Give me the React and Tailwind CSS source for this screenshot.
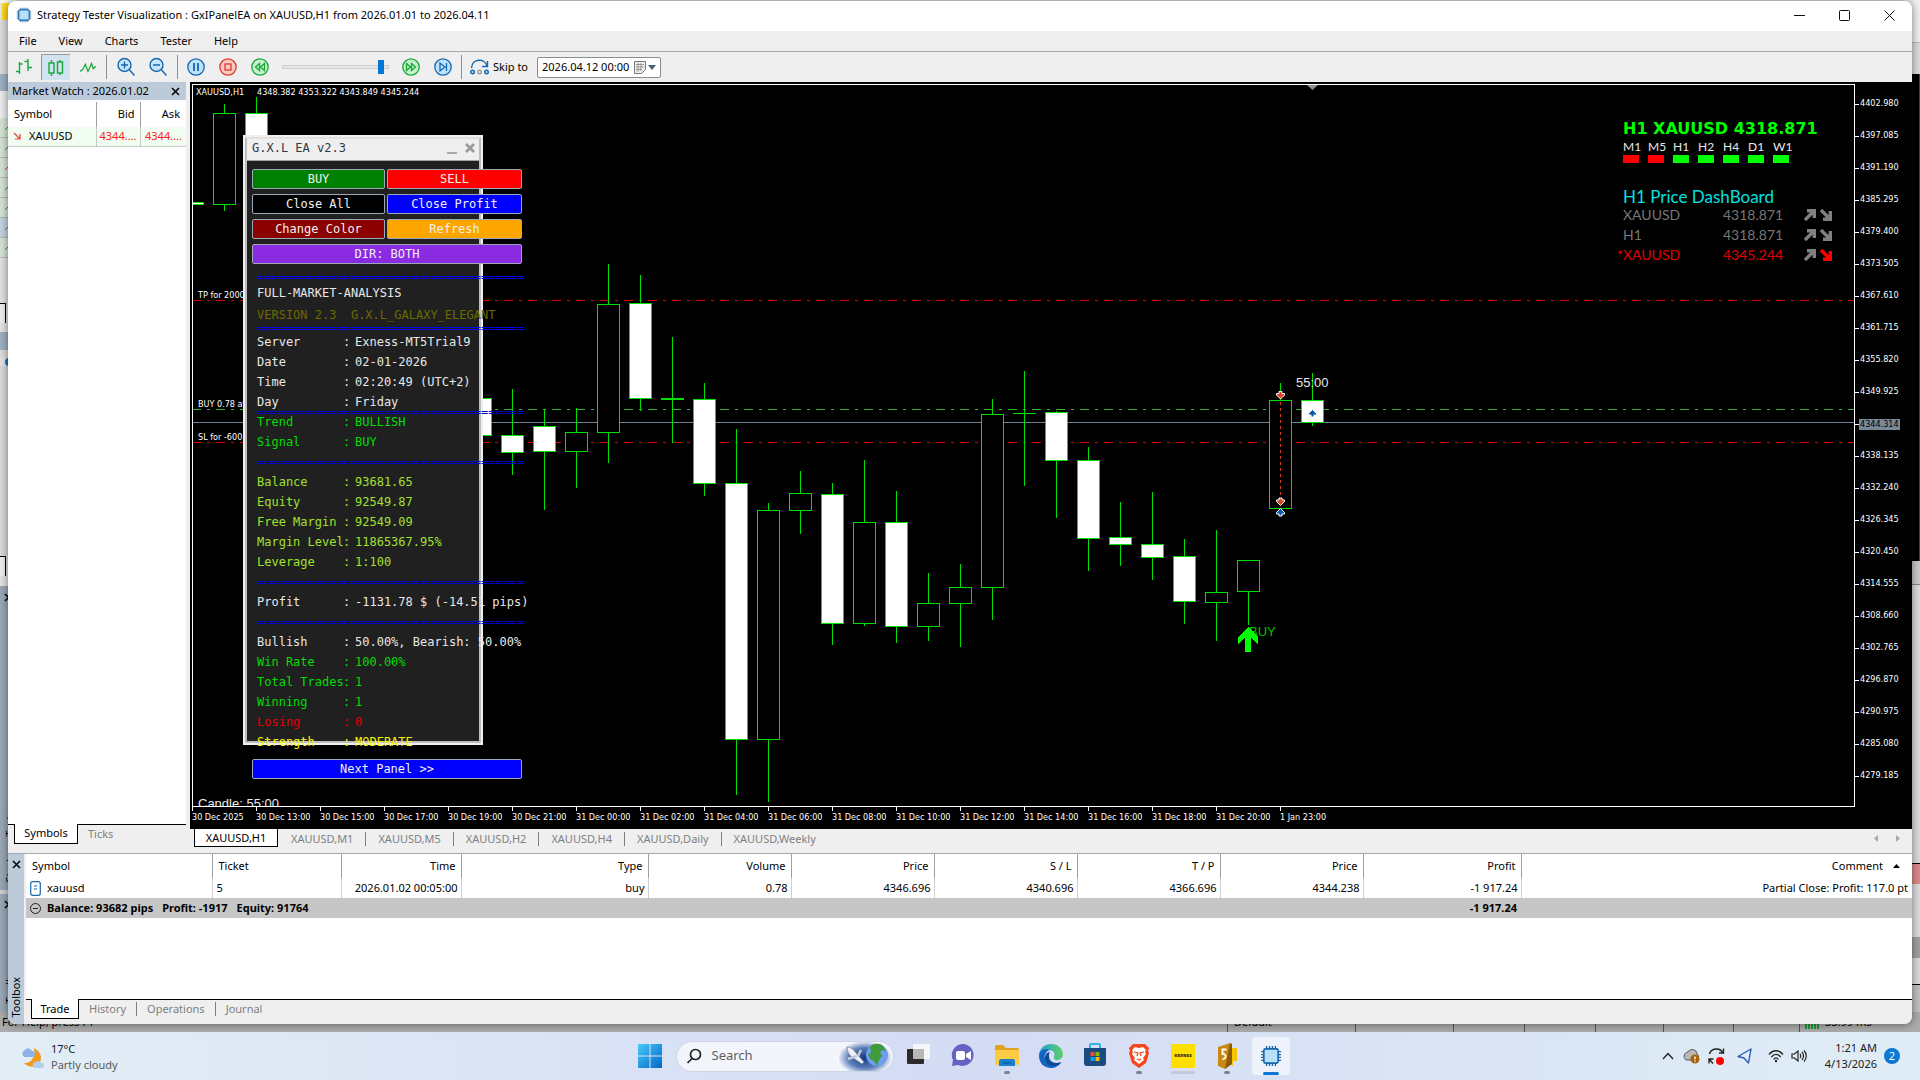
const ui = "font-['Noto_Sans',sans-serif]";
const chartFont = "font-['DejaVu_Sans_Condensed','Noto_Sans',sans-serif]";

/* x step is 32px; o/c are body top/bottom, h/l the wick ends */
const candles = [
  { k: 0, h: 202, l: 204, o: 202, c: 204, f: 1 },
  { k: 1, h: 104, l: 210, o: 113, c: 204 },
  { k: 2, h: 97, l: 170, o: 113, c: 160, f: 1 },
  { k: 9, h: 398, l: 436, o: 398, c: 435, f: 1 },
  { k: 10, h: 389, l: 474, o: 435, c: 452, f: 1 },
  { k: 11, h: 409, l: 509, o: 426, c: 451, f: 1 },
  { k: 12, h: 408, l: 487, o: 432, c: 451 },
  { k: 13, h: 264, l: 462, o: 304, c: 432 },
  { k: 14, h: 275, l: 410, o: 303, c: 398, f: 1 },
  { k: 15, h: 337, l: 442, o: 398, c: 399 },
  { k: 16, h: 383, l: 495, o: 399, c: 483, f: 1 },
  { k: 17, h: 429, l: 794, o: 483, c: 739, f: 1 },
  { k: 18, h: 503, l: 801, o: 510, c: 739 },
  { k: 19, h: 471, l: 533, o: 493, c: 510 },
  { k: 20, h: 483, l: 644, o: 494, c: 623, f: 1 },
  { k: 21, h: 460, l: 625, o: 522, c: 623 },
  { k: 22, h: 491, l: 642, o: 522, c: 626, f: 1 },
  { k: 23, h: 573, l: 640, o: 603, c: 626 },
  { k: 24, h: 564, l: 646, o: 587, c: 603 },
  { k: 25, h: 399, l: 619, o: 414, c: 587 },
  { k: 26, h: 371, l: 485, o: 413, c: 413 },
  { k: 27, h: 411, l: 517, o: 412, c: 460, f: 1 },
  { k: 28, h: 447, l: 570, o: 460, c: 538, f: 1 },
  { k: 29, h: 502, l: 565, o: 537, c: 544, f: 1 },
  { k: 30, h: 492, l: 579, o: 544, c: 557, f: 1 },
  { k: 31, h: 539, l: 623, o: 556, c: 601, f: 1 },
  { k: 32, h: 530, l: 640, o: 592, c: 602 },
  { k: 33, h: 560, l: 624, o: 560, c: 591 },
  { k: 34, h: 383, l: 508, o: 400, c: 508 },
  { k: 35, h: 373, l: 425, o: 400, c: 422, f: 1 },
];

const prices = ["4402.980", "4397.085", "4391.190", "4385.295", "4379.400", "4373.505", "4367.610", "4361.715", "4355.820", "4349.925", "4344.314", "4338.135", "4332.240", "4326.345", "4320.450", "4314.555", "4308.660", "4302.765", "4296.870", "4290.975", "4285.080", "4279.185"];
const times = ["30 Dec 2025", "30 Dec 13:00", "30 Dec 15:00", "30 Dec 17:00", "30 Dec 19:00", "30 Dec 21:00", "31 Dec 00:00", "31 Dec 02:00", "31 Dec 04:00", "31 Dec 06:00", "31 Dec 08:00", "31 Dec 10:00", "31 Dec 12:00", "31 Dec 14:00", "31 Dec 16:00", "31 Dec 18:00", "31 Dec 20:00", "1 Jan 23:00"];

function Chip({ size = 16 }) {
  return (
    <svg width={size} height={size} viewBox="0 0 20 20">
      <path d="M6 1v18M8.7 1v18M11.3 1v18M14 1v18M1 6h18M1 8.7h18M1 11.3h18M1 14h18" stroke="#1567ad" strokeWidth="1.2" />
      <rect x="3.5" y="3.5" width="13" height="13" rx="1.5" fill="#b9e0fb" stroke="#1567ad" strokeWidth="1.5" />
    </svg>
  );
}

function Circle({ fill, stroke, children }) {
  return (
    <svg width="20" height="20" viewBox="0 0 20 20" fill="none" stroke={stroke} strokeWidth="1.3">
      <circle cx="10" cy="10" r="8.2" fill={fill} />
      {children}
    </svg>
  );
}

function ToolButton({ label, on, children }) {
  return (
    <button aria-label={label} className={on ? "flex h-[26px] w-[29px] items-center justify-center border-t border-l border-[#8e9aa6] bg-[#d3e2ef]" : "flex h-[26px] w-8 items-center justify-center"}>
      {children}
    </button>
  );
}

const Sep = () => <div className="h-6 w-px bg-[#8f8f8f]" />;

function Toolbar() {
  const g = "#18a838";
  const b = "#1567ad";
  return (
    <div className="flex h-[30px] items-center bg-[#efefef]">
      <div className="flex w-[98px] items-center">
        <div className="pr-px">
          <ToolButton label="Bar chart">
            <svg width="18" height="18" viewBox="0 0 18 18" fill="none" stroke={g} strokeWidth="1.4"><path d="M4.500 4v12M1 13.500h3.500M4.500 6h3M13 1v12M9.500 3.500H13M13 9.500h4" /></svg>
          </ToolButton>
        </div>
        <ToolButton label="Candlestick chart" on>
          <svg width="18" height="18" viewBox="0 0 18 18" fill="none" stroke={g} strokeWidth="1.4"><path d="M4.500 1v3M4.500 14v3M13 1v2M13 14v2" /><rect x="2" y="4" width="5" height="10" /><rect x="10.500" y="3" width="5" height="11" /></svg>
        </ToolButton>
        <div className="pl-[2px]">
          <ToolButton label="Line chart">
            <svg width="18" height="14" viewBox="0 0 20 16" fill="none" stroke={g} strokeWidth="1.400"><path d="M1 13l3 -2 3-6 3 8 4-9 2 6 3-3" /></svg>
          </ToolButton>
        </div>
      </div>
      <Sep />
      <div className="flex w-[70px] pl-[3px]">
        {["+", "-"].map((s) => (
          <ToolButton key={s} label={s === "+" ? "Zoom in" : "Zoom out"}>
            <svg width="20" height="20" viewBox="0 0 20 20" fill="none" stroke={b} strokeWidth="1.4"><circle cx="8.500" cy="8" r="6.500" fill="#c5e5fb" /><path d="M13.500 13l5 5.500" /><path d={s === "+" ? "M5 8h7M8.500 4.500v7" : "M5 8h7"} /></svg>
          </ToolButton>
        ))}
      </div>
      <Sep />
      <div className="flex items-center pl-[2px]">
        <ToolButton label="Pause"><Circle fill="#bfe2fb" stroke={b}><path d="M8 6v8M12 6v8" strokeWidth="1.800" /></Circle></ToolButton>
        <ToolButton label="Stop"><Circle fill="#fbc9c4" stroke="#dc3a2c"><rect x="7" y="7" width="6" height="6" /></Circle></ToolButton>
        <ToolButton label="Slower"><Circle fill="#c4f3cd" stroke={g}><path d="M9.500 6.500v7L5.500 10zM14.500 6.500v7l-4-3.500z" /></Circle></ToolButton>
        <input type="range" aria-label="Speed" defaultValue="91" min="0" max="95" className="mx-[6px] h-4 w-[107px] appearance-none bg-transparent [&::-webkit-slider-runnable-track]:h-1 [&::-webkit-slider-runnable-track]:border [&::-webkit-slider-runnable-track]:border-[#d0d0d0] [&::-webkit-slider-runnable-track]:bg-[#e6e6e6] [&::-webkit-slider-thumb]:-mt-[6px] [&::-webkit-slider-thumb]:h-[14px] [&::-webkit-slider-thumb]:w-[6px] [&::-webkit-slider-thumb]:appearance-none [&::-webkit-slider-thumb]:bg-[#0078d7]" />
        <ToolButton label="Faster"><Circle fill="#c4f3cd" stroke={g}><path d="M5.500 6.500v7l4-3.500zM10.500 6.500v7l4-3.500z" /></Circle></ToolButton>
        <ToolButton label="Step forward"><Circle fill="#bfe2fb" stroke={b}><path d="M7 6v8l5-4zM13.500 6v8" /></Circle></ToolButton>
      </div>
      <div className="pl-[2px]"><Sep /></div>
      <button className="ml-2 flex items-center gap-[3px] text-[11px]">
        <svg width="20" height="18" viewBox="0 0 20 18" fill="none" strokeWidth="1.400"><path d="M1.500 10C2 0 15 0 17 8M17.500 3v5.500h-5.500" stroke={b} /><circle cx="2.500" cy="14" r="1.800" stroke={b} fill="#c5e5fb" /><circle cx="9.500" cy="14" r="1.800" stroke="#999" /><circle cx="16.500" cy="14" r="1.800" stroke={b} fill="#c5e5fb" /></svg>
        Skip to
      </button>
      <div className="ml-[9px] flex h-[21px] w-[124px] items-center rounded-[2px] border border-[#8c8c8c] bg-white pr-1 pl-1">
        <input aria-label="Skip to date" defaultValue="2026.04.12 00:00" className="w-[92px] min-w-0 text-[11px] outline-none" />
        <button aria-label="Open calendar" className="flex items-center gap-[2px]">
          <svg width="12" height="13" viewBox="0 0 12 13"><path d="M.500.500h11v8l-4 4h-7z" fill="#eee" stroke="#777" /><path d="M2 3.500h8M2 6h8M2 8.500h6M4 2v9M7 2v8" stroke="#999" /></svg>
          <svg width="8" height="5" viewBox="0 0 8 5"><path d="M0 0h8L4 5z" fill="#44607c" /></svg>
        </button>
      </div>
    </div>
  );
}

function MarketWatch() {
  return (
    <section className="flex w-[178px] flex-col bg-white">
      <div className="flex h-[18px] items-center justify-between bg-[#bccbda] pr-[6px] pl-1 text-[11px]">
        <span>Market Watch : 2026.01.02</span>
        <button aria-label="Close Market Watch"><X /></button>
      </div>
      <div className="flex-1 pt-[2px]">
        <table className="w-full table-fixed border-collapse text-[11px]">
          <colgroup><col className="w-[88px]" /><col className="w-11" /><col /></colgroup>
          <thead>
            <tr className="h-[25px]">
              <th className="border-r border-[#a0a0a0] pl-[6px] text-left font-normal">Symbol</th>
              <th className="border-r border-[#a0a0a0] pr-[5px] text-right font-normal">Bid</th>
              <th className="pr-[6px] text-right font-normal">Ask</th>
            </tr>
          </thead>
          <tbody>
            <tr className="h-[19px] border-b border-[#c8c8c8] bg-[#f0fdf0]">
              <td className="border-r border-[#c8c8c8] pl-[5px]">
                <span className="flex items-center gap-2">
                  <svg width="8" height="8" viewBox="0 0 8 8" fill="none" stroke="#e04030" strokeWidth="1.200"><path d="M1 1l6 6M7 2v5H2" /></svg>
                  XAUUSD
                </span>
              </td>
              <td className="border-r border-[#c8c8c8] pr-[3px] text-right text-[#ff1a1a]">4344....</td>
              <td className="pr-1 text-right text-[#ff1a1a]">4344....</td>
            </tr>
          </tbody>
        </table>
      </div>
      <div className="flex h-[29px] bg-[#efefef] text-[11px] text-[#808080]">
        <div className="w-[6px] border-t border-black" />
        <button className="h-[20px] w-[64px] border-r border-b border-l border-black bg-white text-black">Symbols</button>
        <div className="flex-1 border-t border-black"><button className="h-[18px] px-[10px]">Ticks</button></div>
      </div>
    </section>
  );
}

function X() {
  return <svg width="9" height="9" viewBox="0 0 9 9" stroke="#000" strokeWidth="1.500"><path d="M1 1l7 7M8 1L1 8" /></svg>;
}

const sep = "=".repeat(37);
const info = [
  ["Server", "Exness-MT5Trial9", "text-[#e8e8e8]"],
  ["Date", "02-01-2026", "text-[#e8e8e8]"],
  ["Time", "02:20:49 (UTC+2)", "text-[#e8e8e8]"],
  ["Day", "Friday", "text-[#e8e8e8]"],
];
const trend = [
  ["Trend", "BULLISH", "text-[#00dd00]"],
  ["Signal", "BUY", "text-[#00dd00]"],
];
const account = [
  ["Balance", "93681.65", "text-[#a0e030]"],
  ["Equity", "92549.87", "text-[#a0e030]"],
  ["Free Margin", "92549.09", "text-[#a0e030]"],
  ["Margin Level", "11865367.95%", "text-[#a0e030]"],
  ["Leverage", "1:100", "text-[#a0e030]"],
];
const stats = [
  ["Bullish", "50.00%, Bearish: 50.00%", "text-[#e8e8e8]"],
  ["Win Rate", "100.00%", "text-[#00dd00]"],
  ["Total Trades", "1", "text-[#00dd00]"],
  ["Winning", "1", "text-[#00dd00]"],
  ["Losing", "0", "text-[#e00000]"],
  ["Strength", "MODERATE", "text-[#f4f400]"],
];

function Rows({ data }) {
  return data.map(([k, v, c]) => (
    <div key={k} className={"flex h-5 leading-5 whitespace-pre " + c}>
      <span className="w-[86px] shrink-0">{k}</span>
      <span className="w-3 shrink-0">:</span>
      <span>{v}</span>
    </div>
  ));
}

function PanelButton({ className, children }) {
  return <button className={"h-5 rounded-[2px] border border-[#9aa8b8] text-center leading-[18px] text-[#f0f0f0] " + className}>{children}</button>;
}

function EaPanel() {
  return (
    <div className="absolute top-[50px] left-[50px] h-[610px] w-[240px] border-2 border-[#efefef] bg-[#efefef] font-['DejaVu_Sans_Mono',monospace] text-[12px]">
      <div className="flex h-full flex-col border-2 border-[#bdbdbd] border-t-[#e0e0e0]">
        <div className="flex h-[21px] shrink-0 items-center pr-1 pb-[3px] pl-[5px] text-[#303848]">
          <span className="flex-1">G.X.L EA v2.3</span>
          <button aria-label="Minimize panel" className="mr-2 h-4 pt-[9px]"><div className="h-[2px] w-[10px] bg-[#a8a8a8]" /></button>
          <button aria-label="Close panel"><svg width="10" height="10" viewBox="0 0 10 10" stroke="#9a9a9a" strokeWidth="2.600"><path d="M1 1l8 8M9 1L1 9" /></svg></button>
        </div>
        <div className="min-h-0 flex-1 border-t border-[#a0a0a0] bg-[#202020] pt-[8px] pl-[5px]">
          <div className="w-[270px]">
            <div className="grid grid-cols-[133px_135px] gap-x-[2px] gap-y-[5px]">
              <PanelButton className="bg-[#008000]">BUY</PanelButton>
              <PanelButton className="bg-[#ff0000]">SELL</PanelButton>
              <PanelButton className="bg-black">Close All</PanelButton>
              <PanelButton className="bg-[#0000ff]">Close Profit</PanelButton>
              <PanelButton className="bg-[#8b0000]">Change Color</PanelButton>
              <PanelButton className="bg-[#ffa500]">Refresh</PanelButton>
              <PanelButton className="col-span-2 bg-[#8a2be2]">DIR: BOTH</PanelButton>
            </div>
            <div className="pl-[5px] whitespace-pre">
              <div className="mt-2 h-[11px] leading-[11px] text-[#0000ff]">{sep}</div>
              <div className="h-5 leading-5 text-[#e8e8e8]">FULL-MARKET-ANALYSIS</div>
              <div className="mt-[2px] h-5 leading-5 text-[#6b6b00]">{"VERSION 2.3  G.X.L_GALAXY_ELEGANT"}</div>
              <div className="h-[7px] leading-[7px] text-[#0000ff]">{sep}</div>
              <Rows data={info} />
              <div className="h-0 leading-0 text-[#0000d0]">{sep}</div>
              <Rows data={trend} />
              <div className="h-5 leading-5 text-[#0000d0]">{sep}</div>
              <Rows data={account} />
              <div className="h-5 leading-5 text-[#0000d0]">{sep}</div>
              <Rows data={[["Profit", "-1131.78 $ (-14.51 pips)", "text-[#e8e8e8]"]]} />
              <div className="h-5 leading-5 text-[#0000d0]">{sep}</div>
              <Rows data={stats} />
            </div>
            <PanelButton className="mt-[7px] w-[270px] bg-[#0000ff]">Next Panel &gt;&gt;</PanelButton>
          </div>
        </div>
      </div>
    </div>
  );
}

function Marker({ x, y, up, color }) {
  const d = up ? "M0-4L4 0V1.500H1.500V3.500H-1.500V1.500H-4V0z" : "M0 4L4 0V-1.500H1.500V-3.500H-1.500V-1.500H-4V0z";
  return <path transform={`translate(${x} ${y})`} d={d} fill={color} stroke="#fff" strokeWidth="1" />;
}

function Plot() {
  return (
    <svg className="block h-full w-full" shapeRendering="crispEdges">
      <svg x="-193" y="-85" width="100%" height="100%" overflow="visible">
        <g fill="none">
          <line x1="192" y1="300.500" x2="200%" y2="300.500" stroke="#e00000" strokeDasharray="9 6 3 6" />
          <line x1="192" y1="409.500" x2="200%" y2="409.500" stroke="#32b432" strokeDasharray="9 6 3 6" />
          <line x1="192" y1="422.500" x2="200%" y2="422.500" stroke="#708090" />
          <line x1="192" y1="442.500" x2="200%" y2="442.500" stroke="#e00000" strokeDasharray="9 6 3 6" />
        </g>
        {candles.map(({ k, h, l, o, c, f }) => {
          const x = 192 + k * 32;
          return (
            <g key={k} stroke="#00e000">
              <line x1={x + 0.5} x2={x + 0.5} y1={h} y2={l + 1} />
              {c === o ? <line x1={x - 11} x2={x + 12} y1={o + 0.5} y2={o + 0.5} /> : <rect x={x - 10.5} y={o + 0.5} width="22" height={c - o} fill={f ? "#fff" : "#000"} />}
            </g>
          );
        })}
        <line x1="1280.500" x2="1280.500" y1="402" y2="506" stroke="#d83818" strokeDasharray="3 3" />
        <g shapeRendering="auto">
          <Marker x={1280.5} y={395} color="#e04020" />
          <Marker x={1280.5} y={501.500} color="#e04020" />
          <Marker x={1280.5} y={512.500} up color="#0a60b0" />
          <Marker x={1312.5} y={413.500} up color="#0a60b0" />
          <path d="M1307 85h11l-5.500 5z" fill="#8a8f98" />
        </g>
        <g className="font-['Liberation_Sans',sans-serif] text-[13px]">
          <text x="1296" y="387" fill="#e8e8e8">55:00</text>
          <text x="1249" y="636" fill="#00c000">BUY</text>
          <text x="198" y="808" fill="#e8e8e8">Candle: 55:00</text>
        </g>
        <path d="M1248 627l10 10v7l-7-6v14h-6v-14l-7 6v-7z" fill="#00ff00" />
        <g className={chartFont + " text-[9px]"} fill="#fff">
          <text x="196" y="95">XAUUSD,H1</text>
          <text x="257" y="95">4348.382 4353.322 4343.849 4345.244</text>
          <text x="198" y="298">TP for 2000</text>
          <text x="198" y="407">BUY 0.78 at</text>
          <text x="198" y="440">SL for -600</text>
        </g>
      </svg>
    </svg>
  );
}

function ArrowIcon({ down, color }) {
  return (
    <svg width="12" height="12" viewBox="0 0 12 12" fill="none" stroke={color} strokeWidth="3.400">
      {down ? <path d="M1 1l8.500 8.500M10.300 2v8.300H3" /> : <path d="M1 11l8.500-8.500M3 1.700h7.300V9" />}
    </svg>
  );
}

function Dashboard() {
  const frames = [["M1", 0], ["M5", 0], ["H1", 1], ["H2", 1], ["H4", 1], ["D1", 1], ["W1", 1]];
  const rows = [["XAUUSD", "4318.871", 0], ["H1", "4318.871", 0], ["*XAUUSD", "4345.244", 1]];
  return (
    <div className="absolute top-[34px] right-[9px] w-[222px] font-['Lato',sans-serif]">
      <div className="h-5 font-['DejaVu_Sans',sans-serif] text-[16px] leading-5 font-black whitespace-nowrap text-[#00ff00]">H1 XAUUSD 4318.871</div>
      <div className="mt-px flex text-[12px] leading-[14px] text-[#e8e8e8]">
        {frames.map(([n, up]) => (
          <div key={n} className="w-[25px]">
            {n}
            <div className={"mt-px h-2 w-4 " + (up ? "bg-[#00ff00]" : "bg-[#ff0000]")} />
          </div>
        ))}
      </div>
      <div className="mt-6 h-[18px] text-[17px] leading-5 text-[#00e0e0]">H1 Price DashBoard</div>
      {rows.map(([a, b, hot]) => (
        <div key={a} className={"flex h-5 items-center text-[14px] leading-5 " + (hot ? "text-[#e00000]" : "text-[#777777]")}>
          <span className={hot ? "-ml-[6px] w-[106px]" : "w-[100px]"}>{a}</span>
          <span className="w-[81px]">{b}</span>
          <span className="flex gap-1"><ArrowIcon color="#808080" /><ArrowIcon down color={hot ? "#ff0000" : "#808080"} /></span>
        </div>
      ))}
    </div>
  );
}

function ChartArea() {
  const tabs = ["XAUUSD,M1", "XAUUSD,M5", "XAUUSD,H2", "XAUUSD,H4", "XAUUSD,Daily", "XAUUSD,Weekly"];
  return (
    <section className="flex min-w-0 flex-1 flex-col">
      <div className={"flex min-h-0 flex-1 flex-col bg-black pt-[2px] pl-[2px] text-[9px] text-white " + chartFont}>
        <div className="flex min-h-0 flex-1">
          <div className="relative min-w-0 flex-1 border border-white">
            <Plot />
            <EaPanel />
            <Dashboard />
          </div>
          <div className="w-[57px] pt-1">
            {prices.map((p, i) => (
              <div key={p} className="flex h-8 items-center">
                <div className="h-px w-1 bg-white" />
                {i === 10 ? <span className="h-[11px] bg-[#778899] px-px leading-[11px] text-black">{p}</span> : <span className="pl-px">{p}</span>}
              </div>
            ))}
          </div>
        </div>
        <div className="flex h-[22px]">
          {times.map((t) => (
            <div key={t} className="w-16 whitespace-nowrap">
              <div className="h-1 w-px bg-white" />
              <div className="leading-[13px]">{t}</div>
            </div>
          ))}
        </div>
      </div>
      <div className="flex h-6 items-start bg-[#efefef] pl-1 text-[11px] text-[#808080]">
        <button className="mr-px h-[18px] w-[84px] border-r border-b border-l border-black bg-white leading-[17px] text-black">XAUUSD,H1</button>
        {tabs.map((t, i) => (
          <button key={t} className={"mt-[3px] h-[14px] px-3 leading-[14px] " + (i < tabs.length - 1 ? "border-r border-[#808080]" : "")}>{t}</button>
        ))}
        <div className="flex flex-1 justify-end gap-[18px] pt-[6px] pr-3">
          <button aria-label="Scroll tabs left"><svg width="4" height="7" viewBox="0 0 4 7"><path d="M4 0v7L0 3.500z" fill="#a8a8a8" /></svg></button>
          <button aria-label="Scroll tabs right"><svg width="4" height="7" viewBox="0 0 4 7"><path d="M0 0v7l4-3.500z" fill="#a8a8a8" /></svg></button>
        </div>
      </div>
    </section>
  );
}

function Toolbox() {
  const head = ["Symbol", "Ticket", "Time", "Type", "Volume", "Price", "S / L", "T / P", "Price", "Profit"];
  const row = ["xauusd", "5", "2026.01.02 00:05:00", "buy", "0.78", "4346.696", "4340.696", "4366.696", "4344.238", "-1 917.24"];
  return (
    <section className="flex h-[171px] border-t border-[#a8a8a8] bg-[#efefef] text-[11px]">
      <div className="flex w-4 flex-col items-center justify-between bg-[#bccbda] pt-[6px] pb-[6px]">
        <button aria-label="Close Toolbox"><X /></button>
        <span className="rotate-180 leading-4 [writing-mode:vertical-rl]">Toolbox</span>
      </div>
      <div className="ml-[2px] flex min-w-0 flex-1 flex-col">
        <div className="flex-1 bg-white">
          <table className="w-full table-fixed border-collapse">
            <colgroup>
              <col className="w-[186px]" /><col className="w-[129px]" /><col className="w-[120px]" /><col className="w-[187px]" />
              <col className="w-[143px]" /><col className="w-[143px]" /><col className="w-[143px]" /><col className="w-[143px]" /><col className="w-[143px]" />
              <col className="w-[158px]" /><col />
            </colgroup>
            <thead>
              <tr className="h-6">
                {head.map((h, i) => (
                  <th key={i} className={"border-r border-[#a0a0a0] font-normal " + (i < 2 ? "pl-[6px] text-left" : "pr-[5px] text-right")}>{h}</th>
                ))}
                <th className="pr-3 text-right font-normal">
                  <span className="inline-flex items-center gap-[10px]">Comment <svg width="7" height="4" viewBox="0 0 7 4"><path d="M3.500 0L7 4H0z" /></svg></span>
                </th>
              </tr>
            </thead>
            <tbody>
              <tr className="h-5">
                {row.map((c, i) => (
                  <td key={i} className={"border-r border-[#d0d0d0] " + (i < 2 ? "pl-[4px]" : "pr-[3px] text-right")}>
                    {i === 0 ? (
                      <span className="flex items-center gap-[6px]">
                        <svg width="11" height="15" viewBox="0 0 11 15" fill="#fff" stroke="#1567ad" strokeWidth="1.200"><rect x=".700" y=".700" width="9.600" height="13.600" rx="2" /><path d="M4 5h3M4 8h3" /></svg>
                        {c}
                      </span>
                    ) : c}
                  </td>
                ))}
                <td className="pr-1 text-right">Partial Close: Profit: 117.0 pt</td>
              </tr>
              <tr className="h-5 bg-[#c6c6c6] font-bold">
                <td colSpan="9" className="pl-[4px]">
                  <span className="flex items-center gap-[6px] whitespace-pre">
                    <svg width="11" height="11" viewBox="0 0 11 11" fill="none" stroke="#222"><circle cx="5.500" cy="5.500" r="5" /><path d="M3 5.500h5" /></svg>
                    <span className="flex gap-[9px]"><span>Balance: 93682 pips</span><span>Profit: -1917</span><span>Equity: 91764</span></span>
                  </span>
                </td>
                <td className="pr-1 text-right">-1 917.24</td>
                <td />
              </tr>
            </tbody>
          </table>
        </div>
        <div className="flex h-[25px] text-[#808080]">
          <div className="w-[5px] border-t border-black" />
          <button className="h-5 w-12 border-r border-b border-l border-black bg-white leading-[19px] text-black">Trade</button>
          <div className="flex flex-1 items-start border-t border-black pt-[2px]">
            {["History", "Operations", "Journal"].map((t, i) => (
              <button key={t} className={"h-[14px] px-[10px] leading-[14px] " + (i < 2 ? "border-r border-[#808080]" : "")}>{t}</button>
            ))}
          </div>
        </div>
      </div>
    </section>
  );
}

/* Parts of the terminal that stick out behind the tester window */
function BackdropApp() {
  return (
    <div className="absolute inset-0 flex flex-col bg-[#e4e4e4] text-[11px]">
      <div className="flex min-h-0 flex-1 justify-between">
        <div className="flex w-4 flex-col overflow-hidden">
          <div className="h-[3px] bg-[#f4f4f4]" />
          <div className="ml-[2px] h-[17px] bg-[#ffd91a]" />
          <div className="h-[54px] bg-[#dcdcdc]" />
          <div className="h-[17px] bg-[#9fb0c2]" />
          <div className="h-[27px] bg-[#ececec]" />
          {[0, 1, 2, 3, 4, 5, 6].map((i) => (
            <div key={i} className={"flex h-5 items-center border-b border-[#b8b8b8] pl-[5px] " + (i === 5 ? "bg-[#c3d3e2]" : "bg-[#d6e4d6]")}>
              <svg width="6" height="6" viewBox="0 0 6 6" fill="none" stroke={i === 2 ? "#e04030" : "#18a838"}><path d="M0 5l5-5" /></svg>
            </div>
          ))}
          <div className="h-[45px] bg-[#e2e2e2]" />
          <div className="h-[20px] w-[6px] border-t border-r border-black bg-[#eee]" />
          <div className="h-[9px]" />
          <div className="h-[18px] bg-[#9fb0c2]" />
          <div className="h-[8px] bg-[#dcdcdc]" />
          <div className="ml-[5px] h-2 rounded-l-full bg-[#1478c8]" />
          <div className="h-[190px] bg-[#dadada]" />
          <div className="h-[20px] w-[6px] border-t border-r border-black bg-[#eee]" />
          <div className="h-[10px]" />
          <div className="flex h-[304px] flex-col justify-between bg-[#9ba8b6] pt-[7px] pb-2 pl-1">
            <X />
            <span className="rotate-180 leading-3 [writing-mode:vertical-rl]">Strategy Tester</span>
          </div>
          <div className="h-1 bg-[#d0d0d0]" />
          <div className="flex flex-1 flex-col justify-between bg-[#9ba8b6] pt-[6px] pb-2 pl-1">
            <X />
            <span className="rotate-180 leading-3 [writing-mode:vertical-rl]">Toolbox</span>
          </div>
        </div>
        <div className="flex w-4 flex-col">
          <div className="h-[42px] bg-[#f0f0f0]" />
          <div className="h-[32px] border-t border-[#bbb] bg-[#dcdcdc]" />
          <div className="h-[487px] border-r border-[#444] bg-black" />
          <div className="h-[24px] border-b border-[#888] bg-[#cccccc]" />
          <div className="h-[278px] bg-[#dcdcdc]" />
          <div className="h-[21px] border-t border-black bg-[#dc8a8c]" />
          <div className="h-[53px] bg-[#dcdcdc]" />
          <div className="h-[21px] bg-[#a0a0a0]" />
          <div className="h-[27px] border-b border-black bg-[#dadada]" />
          <div className="flex-1 bg-[#c0c0c0]" />
        </div>
      </div>
      <div className="flex h-5 items-center bg-[#ababab] leading-5">
        <span className="w-[1227px] pl-[2px]">For Help, press F1</span>
        <span className="w-32 border-l border-[#555] pl-[6px]">Default</span>
        <span className="h-5 w-[98px] border-l border-[#555]" />
        <span className="h-5 w-[71px] border-l border-[#555]" />
        <span className="h-5 w-[71px] border-l border-[#555]" />
        <span className="h-5 w-[68px] border-l border-[#555]" />
        <span className="h-5 w-[70px] border-l border-[#555]" />
        <span className="h-5 w-[66px] border-l border-[#555]" />
        <span className="flex items-center gap-[6px] border-l border-[#555] pl-[5px]">
          <svg width="14" height="14" viewBox="0 0 14 14" stroke="#1a9a30" strokeWidth="2"><path d="M1 0v14M4 0v14M7 0v14M10 0v14M13 0v14" /></svg>
          33.99 ms
        </span>
      </div>
    </div>
  );
}

const taskIcons = [
  ["Task View", "none", <g key="a"><rect x="4" y="9" width="17" height="15" rx="1" fill="#2b2b2b" /><rect x="10" y="4" width="17" height="15" rx="1" fill="#f6f6f6" /><rect x="10" y="9" width="11" height="10" fill="#b8b8b8" /></g>],
  ["Chat", "none", <g key="b"><path d="M16 4a11 11 0 1 1-5 21l-6 1 1-6A11 11 0 0 1 16 4z" fill="#6661c4" /><rect x="9" y="11" width="9" height="9" rx="2" fill="#fff" /><path d="M19 14l5-3v9l-5-3z" fill="#fff" /></g>],
  ["File Explorer", "dot", <g key="c"><path d="M4 7a2 2 0 0 1 2-2h6l3 3h11a2 2 0 0 1 2 2v4H4z" fill="#e0a020" /><path d="M4 10h24v13a2 2 0 0 1-2 2H6a2 2 0 0 1-2-2z" fill="#fccb45" /><path d="M8 26v-5a2 2 0 0 1 2-2h12a2 2 0 0 1 2 2v5z" fill="#1a80cc" /><path d="M12 23h8" stroke="#0f5c9c" strokeWidth="1.500" /></g>],
  ["Edge", "none", <g key="d"><defs><linearGradient id="ed1" x1="0" x2="1"><stop offset="0" stopColor="#1f9fd8" /><stop offset="1" stopColor="#5fd066" /></linearGradient></defs><path d="M4 16C4 9 9 4 16 4c7 0 12 5 12 10 0 4-3 6-6 6-2 0-4-1-3-3 2-4-1-7-5-7-6 0-10 3-10 8z" fill="url(#ed1)" /><path d="M4 16c0-5 5-8 11-6-4 1-6 5-5 9 1 5 6 7 10 6 3-1 5-2 6-3-2 4-6 6-10 6C9 28 4 23 4 16z" fill="#1565c0" /><path d="M11 14c-4 7 3 15 12 11 2-1 3-2 3-3-5 2-12 1-12-6 0-2 0-3 1-4-2 0-3 1-4 2z" fill="#0d4a9a" /></g>],
  ["Store", "none", <g key="e"><path d="M11 8V5a1 1 0 0 1 1-1h8a1 1 0 0 1 1 1v3" fill="none" stroke="#35b0e8" strokeWidth="2" /><path d="M5 8h22v15a3 3 0 0 1-3 3H8a3 3 0 0 1-3-3z" fill="#1c4a80" /><rect x="11.500" y="12" width="4" height="4" fill="#f25022" /><rect x="16.500" y="12" width="4" height="4" fill="#7fba00" /><rect x="11.500" y="17" width="4" height="4" fill="#00a4ef" /><rect x="16.500" y="17" width="4" height="4" fill="#ffb900" /></g>],
  ["Brave", "dot", <g key="f"><path d="M10 4h12l4 4-1 3 1 2-3 10-7 5-7-5L6 13l1-2-1-3z" fill="#f6441c" /><path d="M16 8l4-1 3 3-1 2 1 2-3 4 1 2-5 4-5-4 1-2-3-4 1-2-1-2 3-3z" fill="#fff" /><path d="M11 12l4 1-1 3M21 12l-4 1 1 3M14 19l2 1 2-1" fill="none" stroke="#f6441c" strokeWidth="1.200" /></g>],
  ["Exness", "bar", <g key="g"><rect x="4" y="4" width="24" height="24" fill="#ffde02" /><text x="16" y="17" textAnchor="middle" fontFamily="Noto Sans" fontSize="5" fontWeight="800" fill="#222">exness</text></g>],
  ["MetaTrader 5", "dot", <g key="h"><path d="M16 8h10v13h-4v5l-6-3z" fill="#f7c600" /><path d="M7 7l12-4v21l-5 5-7-3z" fill="#c98a12" /><path d="M19 3l2 1v20l-7 5z" fill="#8a5a08" /><path d="M15.500 9.500h-4v4.500c4-.5 4.500 5 0 5" fill="none" stroke="#fff" strokeWidth="1.800" /></g>],
];

function Taskbar() {
  return (
    <footer className="grid h-12 grid-cols-[1fr_auto_1fr] items-center bg-linear-to-r from-[#e2eef6] via-[#d4dcf4] to-[#e0edf6] text-[11px] text-[#202020]">
      <button className="flex items-center gap-[6px] pt-px pl-[19px] text-left">
        <svg width="26" height="26" viewBox="0 0 26 26"><path d="M15 4c8 4 9 12 4 17-4 3-11 2-14-2 6 1 12-5 10-15z" fill="#f39a1c" /><path d="M5 13a4 4 0 0 1 1-7 4 4 0 0 1 7 1 3 3 0 0 1 0 6z" fill="#8fb0e6" /><path d="M15 24a3.500 3.500 0 0 1 1-6 4 4 0 0 1 6 1 2.500 2.500 0 0 1 1 5z" fill="#b4ccf0" /></svg>
        <span className="leading-4">17°C<br /><span className="text-[#5a5a5a]">Partly cloudy</span></span>
      </button>
      <div className="flex items-center">
        <button aria-label="Start" className="flex w-11 justify-center">
          <svg width="24" height="24" viewBox="0 0 24 24"><defs><linearGradient id="win" x1="0" y1="0" x2="1" y2="1"><stop offset="0" stopColor="#4cc8fa" /><stop offset="1" stopColor="#0068c8" /></linearGradient></defs><path d="M0 0h11.500v11.500H0zM12.500 0H24v11.500H12.500zM0 12.500h11.500V24H0zM12.500 12.500H24V24H12.500z" fill="url(#win)" /></svg>
        </button>
        <label className="mr-[3px] ml-1 flex h-[31px] w-[218px] items-center overflow-hidden rounded-full border border-[#cfd4e4] bg-[#f3f5fc] pl-[9px]">
          <svg width="16" height="16" viewBox="0 0 16 16" fill="none" stroke="#222" strokeWidth="1.700"><circle cx="9.500" cy="6.500" r="5" /><path d="M6 10.500L1.500 15" /></svg>
          <input aria-label="Search" placeholder="Search" className="ml-[10px] w-[110px] min-w-0 flex-1 text-[13px] outline-none placeholder:text-[#606060]" />
          <svg width="54" height="30" viewBox="0 0 54 30"><defs><radialGradient id="sp"><stop offset="0" stopColor="#123a80" /><stop offset=".6" stopColor="#5a7cb8" /><stop offset="1" stopColor="#f3f5fc" /></radialGradient></defs><ellipse cx="26" cy="17" rx="27" ry="17" fill="url(#sp)" /><path d="M8 6c4 0 7 3 9 6l8 9-2 2-10-7c-3-2-5-6-5-10z" fill="#eef0f6" stroke="#7a849c" strokeWidth=".8" /><path d="M9 18l9-3M22 9l-3 6" stroke="#c4cada" strokeWidth="2.500" /><circle cx="38" cy="14" r="11" fill="#6f9df0" /><path d="M31 6c3-4 10-4 13-1l3 5-4-1-2 3 3 3-3 2-3 8-3-5-4-2-2-5 3-1z" fill="#3f9a38" /></svg>
        </label>
        {taskIcons.map(([name, mark, art]) => (
          <button key={name} aria-label={name} className="flex h-10 w-11 flex-col items-center pt-1">
            <svg width="32" height="32" viewBox="0 0 32 32">{art}</svg>
            <div className={mark === "dot" ? "-mt-px h-[3px] w-[6px] rounded-full bg-[#80838c]" : mark === "bar" ? "-mt-px h-[3px] w-6 rounded-full bg-[#c4cadc]" : "h-0"} />
          </button>
        ))}
        <button aria-label="Strategy Tester" className="mx-[3px] flex h-[38px] w-[38px] flex-col items-center rounded-[4px] bg-[#eef2fb] pt-2">
          <Chip size={22} />
          <div className="mt-[5px] h-[3px] w-4 rounded-full bg-[#0a78d4]" />
        </button>
      </div>
      <div className="flex items-center justify-end pr-5">
        <button aria-label="Hidden icons" className="mr-[9px]"><svg width="12" height="8" viewBox="0 0 12 8" fill="none" stroke="#222" strokeWidth="1.400"><path d="M1 7l5-5.500L11 7" /></svg></button>
        <svg className="mr-2" width="17" height="16" viewBox="0 0 17 16"><path d="M3 12C-1 9 2 4 5 4c2-4 9-3 9 2 2 1 2 5 0 6z" fill="#b8b8b8" stroke="#555" /><circle cx="12" cy="11" r="4.500" fill="#a8640a" /><path d="M12 8.500v3M12 12.500v1.200" stroke="#fff" strokeWidth="1.300" /></svg>
        <svg className="mr-3" width="17" height="18" viewBox="0 0 17 18" fill="none" stroke="#222" strokeWidth="1.400"><path d="M1.500 7C3 1 12 0 15 6M15.500 1.500V6H11M1 16.500V12h4.500M1.500 12.500L5 16.500" /><circle cx="12" cy="14" r="4" fill="#f00" stroke="none" /></svg>
        <svg className="mr-4" width="15" height="16" viewBox="0 0 15 16" fill="#e0ecfa" stroke="#2a5cae" strokeWidth="1.400" strokeLinejoin="round"><path d="M14 1L1 8.500l6 1.500 4.500 5z" /></svg>
        <svg className="mr-[7px]" width="16" height="14" viewBox="0 0 16 14" fill="none" stroke="#222" strokeWidth="1.300"><path d="M1 5.500c4-5 10-5 14 0M3.300 8c3-3.500 6.500-3.500 9.400 0M5.600 10.300c1.500-1.800 3.300-1.800 4.800 0" /><circle cx="8" cy="12" r="1.200" fill="#222" stroke="none" /></svg>
        <svg className="mr-[18px]" width="16" height="14" viewBox="0 0 16 14" fill="none" stroke="#222" strokeWidth="1.200"><path d="M1 5h2.500L7 2v10L3.500 9H1zM9 5c1 1 1 3 0 4M11 3c2 2 2 6 0 8M13 1.500c3 3 3 8 0 11" /></svg>
        <div className="mr-[7px] text-right leading-4">1:21 AM<br />4/13/2026</div>
        <span className="flex h-4 w-4 items-center justify-center rounded-full bg-[#0a78d4] text-[11px] text-white">2</span>
      </div>
    </footer>
  );
}

export default function App() {
  return (
    <div className={"flex h-screen flex-col overflow-hidden text-black " + ui}>
      <div className="relative flex min-h-0 flex-1 flex-col">
        <BackdropApp />
        <main className="relative mx-2 mt-px mb-2 flex min-h-0 flex-1 flex-col overflow-hidden rounded-lg bg-[#efefef] shadow-[0_0_8px_rgba(0,0,0,0.5)]">
          <header className="flex h-[30px] items-center bg-white pr-[17px] pb-[2px] pl-2">
            <Chip size={16} />
            <h1 className="flex-1 pl-[5px] text-[11px]">Strategy Tester Visualization : GxIPanelEA on XAUUSD,H1 from 2026.01.01 to 2026.04.11</h1>
            <div className="flex items-center gap-[34px]">
              <button aria-label="Minimize"><svg width="11" height="11" viewBox="0 0 11 11" stroke="#111"><path d="M0 5.500h11" /></svg></button>
              <button aria-label="Maximize"><svg width="11" height="11" viewBox="0 0 11 11" fill="none" stroke="#111"><rect x=".500" y=".500" width="10" height="10" rx="1" /></svg></button>
              <button aria-label="Close"><svg width="11" height="11" viewBox="0 0 11 11" stroke="#111"><path d="M.500.500l10 10M10.500.500l-10 10" /></svg></button>
            </div>
          </header>
          <nav className="flex h-[21px] items-center gap-[22px] border-b border-[#a8a8a8] pl-[11px] text-[11px]">
            {["File", "View", "Charts", "Tester", "Help"].map((m) => <button key={m}>{m}</button>)}
          </nav>
          <Toolbar />
          <div className="flex min-h-0 flex-1 gap-1">
            <MarketWatch />
            <ChartArea />
          </div>
          <Toolbox />
        </main>
      </div>
      <Taskbar />
    </div>
  );
}
